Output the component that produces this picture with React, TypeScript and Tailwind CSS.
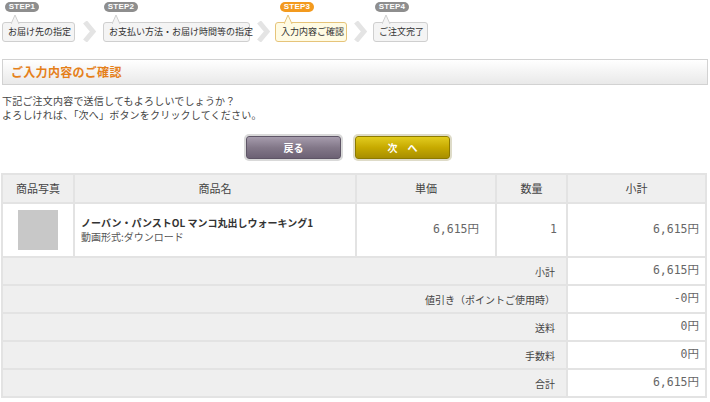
import React from "react";

const F = { fontFamily: '"Noto Sans CJK JP", "Noto Sans", sans-serif' };

function Chevron() {
  return (
    <svg width="14" height="21" viewBox="0 0 14 21" className="block">
      <polyline points="3,1 11,10.5 3,20" fill="none" stroke="#e4e4e4" strokeWidth="5" />
    </svg>
  );
}

function Step({
  num,
  label,
  active,
  className,
  badgeOffset,
}: {
  num: number;
  label: string;
  active?: boolean;
  className: string;
  badgeOffset: string;
}) {
  return (
    <div className={"relative flex flex-col shrink-0 " + className}>
      <div
        className={
          "h-[10px] w-[34px] rounded-full text-white text-[8px] font-bold leading-[10px] text-center tracking-[0.2px] " +
          badgeOffset +
          (active ? " bg-[#f39a1e]" : " bg-[#8e8e8e]")
        }
        style={{ fontFamily: '"Liberation Sans", Arial, sans-serif' }}
      >
        STEP{num}
      </div>
      <div
        className={
          "relative mt-[10px] h-[20px] rounded-[3px] border flex items-center px-[5px] text-[9px] text-[#333] whitespace-nowrap " +
          (active ? "bg-[#fffbe3] border-[#e6c47a]" : "bg-[#f4f4f4] border-[#cfcfcf]")
        }
      >
        <svg width="9" height="9" viewBox="0 0 9 9" className="absolute left-[8px] top-[-8px]">
          <polygon points="0,9 4,0 8,9" fill={active ? "#fffbe3" : "#f4f4f4"} />
          <polyline points="0,9 4,0 8,9" fill="none" stroke={active ? "#e6c47a" : "#cfcfcf"} strokeWidth="1" />
        </svg>
        {label}
      </div>
    </div>
  );
}

export default function App() {
  const th = "border-2 border-[#e3e3e3] bg-[#efefef] text-[11px] text-[#444] font-normal text-center";
  const num = "text-[11.5px] text-[#666]";
  const mono = { fontFamily: '"DejaVu Sans Mono", "Liberation Mono", "Noto Sans CJK JP", monospace' };
  const summary: [string, string][] = [
    ["小計", "6,615円"],
    ["値引き（ポイントご使用時）", "-0円"],
    ["送料", "0円"],
    ["手数料", "0円"],
    ["合計", "6,615円"],
  ];
  return (
    <div className="w-[710px] h-[402px] bg-white overflow-hidden" style={F}>
      {/* stepper */}
      <div className="flex items-end pt-[2px] pl-[2px]">
        <Step num={1} label="お届け先の指定" className="w-[73px]" badgeOffset="ml-[3px]" />
        <div className="w-[28px] flex justify-center">
          <Chevron />
        </div>
        <Step num={2} label="お支払い方法・お届け時間等の指定" className="w-[147px]" badgeOffset="ml-[1px]" />
        <div className="w-[25px] flex justify-center">
          <Chevron />
        </div>
        <Step num={3} label="入力内容ご確認" active className="w-[72px]" badgeOffset="ml-[5px]" />
        <div className="w-[26px] flex justify-center">
          <Chevron />
        </div>
        <Step num={4} label="ご注文完了" className="w-[55px]" badgeOffset="ml-[2px]" />
      </div>

      {/* header */}
      <div className="mt-[17px] mx-[2px] h-[26px] border border-[#d2d2d2] bg-gradient-to-b from-[#ffffff] to-[#e9e9e9] flex items-center pl-[8px]">
        <span className="text-[12px] font-bold text-[#e5801a] tracking-[0.3px]">ご入力内容のご確認</span>
      </div>

      {/* message */}
      <div className="mt-[9px] pl-[2px] text-[10px] leading-[14px] text-[#444] tracking-[0.2px]">
        <p>下記ご注文内容で送信してもよろしいでしょうか？</p>
        <p>よろしければ、「次へ」ボタンをクリックしてください。</p>
      </div>

      {/* buttons */}
      <div className="mt-[14px] flex justify-center gap-[14px] pr-[14px]">
        <button className="w-[95px] h-[23px] rounded-[3px] border border-[#5e5566] bg-gradient-to-b from-[#a69cad] via-[#837889] to-[#6c6174] text-white text-[10px] font-bold shadow-[0_0_0_2px_#d9d9d9]">
          戻る
        </button>
        <button className="w-[95px] h-[23px] rounded-[3px] border border-[#8d7a00] bg-gradient-to-b from-[#e2cc1c] via-[#c7aa00] to-[#a88f00] text-white text-[10px] font-bold shadow-[0_0_0_2px_#dedbc8]">
          次　へ
        </button>
      </div>

      {/* table */}
      <div className="mt-[14px] pl-[1px]">
        <table className="table-fixed border-collapse w-[704px]">
          <colgroup>
            <col className="w-[72px]" />
            <col className="w-[282px]" />
            <col className="w-[140px]" />
            <col className="w-[71px]" />
            <col className="w-[139px]" />
          </colgroup>
          <thead>
            <tr className="h-[29px]">
              <th className={th}>商品写真</th>
              <th className={th}>商品名</th>
              <th className={th}>単価</th>
              <th className={th}>数量</th>
              <th className={th}>小計</th>
            </tr>
          </thead>
          <tbody>
            <tr className="h-[54px]">
              <td className="border-2 border-[#e3e3e3]">
                <div className="mx-auto w-[40px] h-[40px] bg-[#c8c8c8]" />
              </td>
              <td className="border-2 border-[#e3e3e3] pl-[6px]">
                <div className="text-[10px] font-bold text-[#333] leading-[14px]">
                  ノーバン・パンストOL マンコ丸出しウォーキング1
                </div>
                <div className="text-[10px] text-[#555] leading-[14px]">動画形式:ダウンロード</div>
              </td>
              <td className={"border-2 border-[#e3e3e3] text-right pr-[16px] " + num} style={mono}>
                6,615円
              </td>
              <td className={"border-2 border-[#e3e3e3] text-right pr-[9px] " + num} style={mono}>
                1
              </td>
              <td className={"border-2 border-[#e3e3e3] text-right pr-[6px] " + num} style={mono}>
                6,615円
              </td>
            </tr>
            {summary.map(([k, v]) => (
              <tr key={k} className="h-[28px]">
                <td colSpan={4} className="border-2 border-[#e3e3e3] bg-[#efefef] text-right pr-[11px] text-[10px] text-[#444]">
                  {k}
                </td>
                <td className={"border-2 border-[#e3e3e3] text-right pr-[6px] " + num} style={mono}>
                  {v}
                </td>
              </tr>
            ))}
          </tbody>
        </table>
      </div>
    </div>
  );
}
